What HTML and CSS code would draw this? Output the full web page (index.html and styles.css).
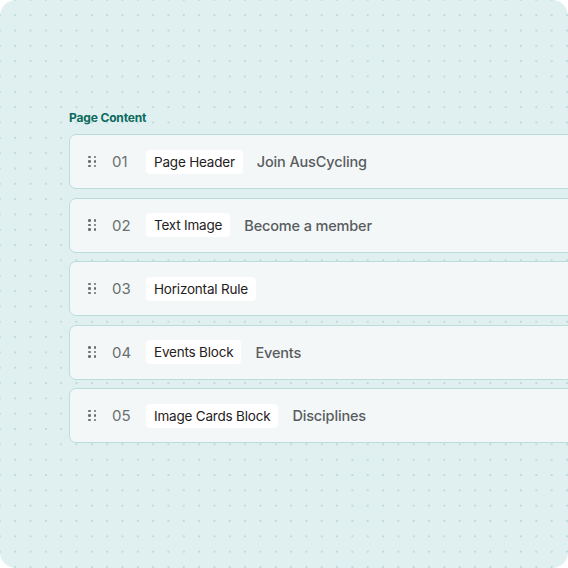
FILE: index.html
```html
<!DOCTYPE html>
<html>
<head>
<meta charset="utf-8">
<link rel="stylesheet" href="styles.css">
</head>
<body>
<div class="canvas">
  <div class="section">
    <div class="label">Page Content</div>
    <div class="list">
      <div class="card"><span class="handle"><i></i><i></i><i></i><i></i><i></i><i></i></span><span class="num">01</span><span class="chip">Page Header</span><span class="title">Join AusCycling</span></div>
      <div class="card"><span class="handle"><i></i><i></i><i></i><i></i><i></i><i></i></span><span class="num">02</span><span class="chip">Text Image</span><span class="title">Become a member</span></div>
      <div class="card"><span class="handle"><i></i><i></i><i></i><i></i><i></i><i></i></span><span class="num">03</span><span class="chip">Horizontal Rule</span></div>
      <div class="card"><span class="handle"><i></i><i></i><i></i><i></i><i></i><i></i></span><span class="num">04</span><span class="chip">Events Block</span><span class="title">Events</span></div>
      <div class="card"><span class="handle"><i></i><i></i><i></i><i></i><i></i><i></i></span><span class="num">05</span><span class="chip">Image Cards Block</span><span class="title">Disciplines</span></div>
    </div>
  </div>
</div>
</body>
</html>
```
FILE: styles.css
```css
html, body {
  margin: 0;
  padding: 0;
  background: #ffffff;
}
body {
  font-family: Inter, "Noto Sans", sans-serif;
}
.canvas {
  width: 568px;
  height: 568px;
  border-radius: 16px;
  background-color: #e0f0f0;
  background-image: radial-gradient(circle, #b6d9d5 0.6px, transparent 1.1px);
  background-size: 15.33px 15.33px;
  background-position: 7.5px 7.5px;
  overflow: hidden;
  box-sizing: border-box;
  padding-top: 110px;
  padding-left: 69px;
}
.label {
  font-size: 12px;
  font-weight: 700;
  letter-spacing: -0.15px;
  color: #0b6a5c;
  line-height: 16px;
  margin-bottom: 8px;
}
.list {
  display: flex;
  flex-direction: column;
  gap: 8.5px;
  width: 540px;
}
.card {
  height: 55px;
  box-sizing: border-box;
  border: 1px solid #b9dddb;
  border-bottom-width: 1.5px;
  border-radius: 7px;
  background: #f3f7f7;
  display: flex;
  align-items: center;
  padding-left: 18px;
}
.handle {
  display: grid;
  grid-template-columns: 2.5px 2.5px;
  grid-auto-rows: 2.5px;
  column-gap: 3px;
  row-gap: 2px;
  width: 8px;
}
.handle i {
  display: block;
  width: 2.5px;
  height: 2.5px;
  border-radius: 50%;
  background: #6a6e70;
}
.num {
  margin-left: 16px;
  font-size: 15px;
  color: #6b6f71;
  width: 34px;
}
.chip {
  background: #ffffff;
  border-radius: 4px;
  height: 24px;
  line-height: 24px;
  padding: 0 8px;
  font-size: 13.5px;
  letter-spacing: -0.2px;
  color: #1f2122;
}
.title {
  margin-left: 14px;
  font-size: 14.5px;
  letter-spacing: -0.15px;
  font-weight: 500;
  color: #585c5f;
}
```
